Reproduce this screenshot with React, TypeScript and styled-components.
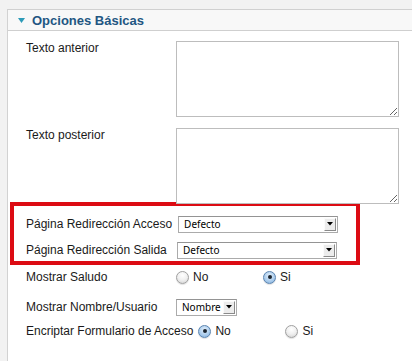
import styled, { createGlobalStyle } from "styled-components";

const GlobalStyle = createGlobalStyle`
  html, body {
    margin: 0;
    padding: 0;
    height: 100%;
    overflow: hidden;
  }
  body {
    background: #f2f2f2;
    font-family: "Liberation Sans", Arial, sans-serif;
    color: #1a1a1a;
  }
`;

const Panel = styled.section`
  margin: 9px 0 0 7px;
  height: 360px;
  background: #fff;
  border-left: 1px solid #d2d2d2;
  border-top: 1px solid #d0d0d0;
`;

const Header = styled.div`
  display: flex;
  align-items: center;
  gap: 7px;
  height: 20px;
  padding-left: 10px;
  background: #f8f8f8;
  border-bottom: 1px solid #cfcfcf;
`;

const Title = styled.h3`
  margin: 0;
  font-size: 13px;
  font-weight: bold;
  color: #225682;
`;

const Body = styled.div`
  padding: 10px 0 0 18px;
`;

const FieldRow = styled.div<{ $top?: number; $align?: string }>`
  display: flex;
  align-items: ${(p) => p.$align || "center"};
  min-height: 18px;
  margin-top: ${(p) => p.$top || 0}px;
  font-size: 12px;
  line-height: 14px;
`;

const FieldLabel = styled.label`
  box-sizing: border-box;
  flex-shrink: 0;
  min-width: 150px;
  padding-right: 5px;
  white-space: nowrap;
`;

const TextArea = styled.textarea`
  box-sizing: border-box;
  width: 223px;
  height: 76px;
  margin: 0;
  border: 1px solid #bdbdbd;
  background: #fff;
`;

const Highlight = styled.div`
  box-sizing: border-box;
  width: 350px;
  margin: -2px 0 0 -16px;
  padding: 9px 0 2px 12px;
  border: 4px solid #dc0b13;
`;

const SelectBox = styled.div<{ $width: number; $shift?: number }>`
  display: inline-flex;
  align-items: center;
  justify-content: space-between;
  box-sizing: border-box;
  width: ${(p) => p.$width}px;
  height: 17px;
  margin-left: ${(p) => p.$shift || 0}px;
  padding: 0 1px 0 5px;
  border: 1px solid #ababab;
  border-top-color: #949494;
  background: #fff;
  font-family: "Noto Sans", Tahoma, sans-serif;
  font-size: 10px;
  color: #000;
`;

const SelectArrow = styled.span`
  display: flex;
  align-items: center;
  justify-content: center;
  box-sizing: border-box;
  width: 12px;
  height: 13px;
  background: #ececec;
  border: 1px solid;
  border-color: #fbfbfb #8a8a8a #8a8a8a #fbfbfb;
`;

const RadioOption = styled.span`
  display: inline-flex;
  align-items: center;
  gap: 4px;
  width: 87px;
`;

const Radio = styled.span<{ $checked?: boolean }>`
  position: relative;
  box-sizing: border-box;
  width: 13px;
  height: 13px;
  border-radius: 50%;
  border: 1px solid ${(p) => (p.$checked ? "#5b84b0" : "#a0a0a0")};
  background: ${(p) =>
    p.$checked
      ? "radial-gradient(circle at 50% 35%, #e4f0fb 0%, #a9cbec 60%, #7eaad6 100%)"
      : "radial-gradient(circle at 50% 30%, #ffffff 0%, #f0f0f0 50%, #cfcfcf 100%)"};
  box-shadow: 0 1px 1px rgba(0, 0, 0, 0.12);

  &::after {
    content: "";
    display: ${(p) => (p.$checked ? "block" : "none")};
    position: absolute;
    left: 50%;
    top: 50%;
    width: 4px;
    height: 4px;
    margin: -2px 0 0 -2px;
    border-radius: 50%;
    background: #1b2530;
  }
`;

function Select({ value, width, shift }: { value: string; width: number; shift?: number }) {
  return (
    <SelectBox $width={width} $shift={shift}>
      <span>{value}</span>
      <SelectArrow>
        <svg width="6" height="4" viewBox="0 0 6 4">
          <path d="M0 0h6L3 3.5z" fill="#000" />
        </svg>
      </SelectArrow>
    </SelectBox>
  );
}

function RadioPair({ checked }: { checked: "No" | "Si" }) {
  return (
    <>
      <RadioOption>
        <Radio $checked={checked === "No"} />
        No
      </RadioOption>
      <RadioOption>
        <Radio $checked={checked === "Si"} />
        Si
      </RadioOption>
    </>
  );
}

export default function App() {
  return (
    <>
      <GlobalStyle />
      <Panel>
        <Header>
          <svg width="7" height="5" viewBox="0 0 7 5">
            <path d="M0 0h7L3.5 5z" fill="#2d9bb8" />
          </svg>
          <Title>Opciones Básicas</Title>
        </Header>
        <Body>
          <FieldRow $align="flex-start">
            <FieldLabel>Texto anterior</FieldLabel>
            <TextArea />
          </FieldRow>
          <FieldRow $align="flex-start" $top={11}>
            <FieldLabel>Texto posterior</FieldLabel>
            <TextArea />
          </FieldRow>
          <Highlight>
            <FieldRow>
              <FieldLabel>Página Redirección Acceso</FieldLabel>
              <Select value="Defecto" width={160} shift={1} />
            </FieldRow>
            <FieldRow $top={8}>
              <FieldLabel>Página Redirección Salida</FieldLabel>
              <Select value="Defecto" width={160} shift={1} />
            </FieldRow>
          </Highlight>
          <FieldRow $top={3}>
            <FieldLabel>Mostrar Saludo</FieldLabel>
            <RadioPair checked="Si" />
          </FieldRow>
          <FieldRow $top={12}>
            <FieldLabel>Mostrar Nombre/Usuario</FieldLabel>
            <Select value="Nombre" width={61} />
          </FieldRow>
          <FieldRow $top={6}>
            <FieldLabel>Encriptar Formulario de Acceso</FieldLabel>
            <RadioPair checked="No" />
          </FieldRow>
        </Body>
      </Panel>
    </>
  );
}
